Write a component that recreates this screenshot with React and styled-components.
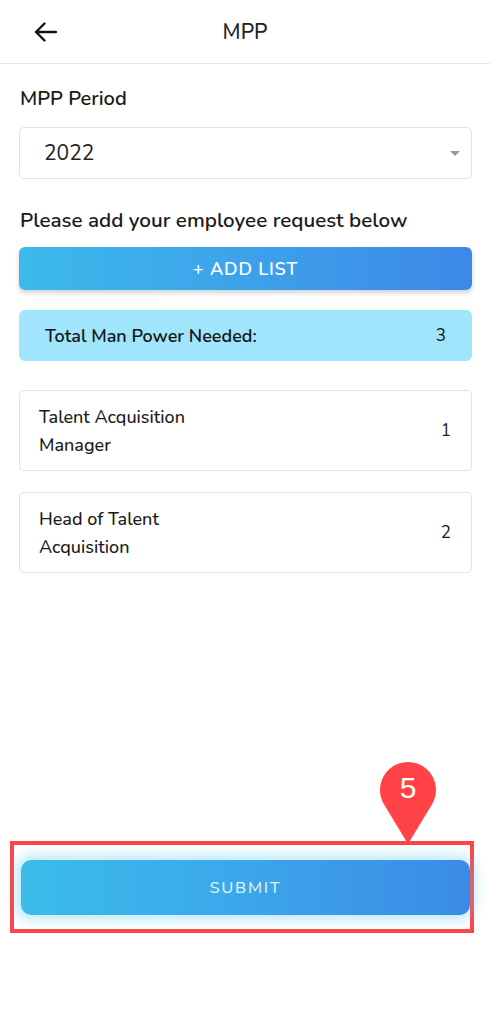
import styled, { createGlobalStyle } from "styled-components";

const GlobalStyle = createGlobalStyle`
    body {
        margin: 0;
        background: #ffffff;
        font-family: "Nunito", "Lato", "Open Sans", sans-serif;
        color: #1c1c1c;
    }
`

const Page = styled.div`
    width: 490px;
    min-height: 1024px;
    background: #ffffff;
`

const Header = styled.header`
    height: 63px;
    display: grid;
    grid-template-columns: 1fr auto 1fr;
    align-items: center;
    border-bottom: 1.5px solid #e6e6e6;
    padding: 0 34px;
`

const BackButton = styled.button`
    width: 24px;
    height: 24px;
    padding: 0;
    border: none;
    background: none;
    display: flex;
    align-items: center;
    cursor: pointer;
`

const Title = styled.h1`
    margin: 0;
    font-size: 21px;
    font-weight: 500;
    color: #222;
`

const Content = styled.main`
    padding: 0 18px 0 19px;
    display: flex;
    flex-direction: column;
`

const Label = styled.h2`
    margin: ${(p) => p.$top}px 0 0 1px;
    font-size: ${(p) => p.$size}px;
    font-weight: 600;
    line-height: 28px;
    color: #1a1a1a;
`

const Select = styled.div`
    margin-top: 14px;
    height: 52px;
    box-sizing: border-box;
    border: 1px solid #e2e2e2;
    border-radius: 5px;
    display: flex;
    align-items: center;
    justify-content: space-between;
    padding: 0 11px 0 24px;
    font-size: 21px;
    color: #222;
`

const Caret = styled.span`
    width: 0;
    height: 0;
    border-left: 5px solid transparent;
    border-right: 5px solid transparent;
    border-top: 5px solid #9a9a9a;
`

const AddButton = styled.button`
    margin-top: 13px;
    height: 43px;
    border: none;
    border-radius: 6px;
    background: linear-gradient(90deg, #3cb9ec 0%, #3da2ea 50%, #3d88e8 100%);
    box-shadow: 0 3px 5px rgba(0, 0, 0, 0.18);
    color: #ffffff;
    font-family: inherit;
    font-size: 18px;
    font-weight: 600;
    letter-spacing: 0.8px;
    cursor: pointer;
`

const TotalBox = styled.div`
    margin-top: 20px;
    height: 51px;
    border-radius: 6px;
    background: #a0e5fb;
    display: flex;
    align-items: center;
    justify-content: space-between;
    padding: 0 26px 0 26px;
    font-size: 18px;
    font-weight: 600;
    color: #151515;
`

const Count = styled.span`
    font-weight: 400;
    font-size: 17px;
`

const CardList = styled.div`
    margin-top: 29px;
    display: flex;
    flex-direction: column;
    gap: 21px;
`

const Card = styled.div`
    height: 81px;
    box-sizing: border-box;
    border: 1px solid #e2e2e2;
    border-radius: 5px;
    display: flex;
    align-items: center;
    justify-content: space-between;
    padding: 0 20px 0 19px;
    font-size: 18px;
    color: #1a1a1a;
`

const CardTitle = styled.div`
    width: 170px;
    line-height: 28px;
    font-weight: 500;
`

const Highlight = styled.div`
    position: relative;
    margin: 268px 0 0 10px;
    width: 464px;
    height: 92px;
    box-sizing: border-box;
    border: 4px solid #ff4346;
    padding: 15px 0 0 7px;
`

const SubmitButton = styled.button`
    width: 449px;
    height: 55px;
    border: none;
    border-radius: 10px;
    background: linear-gradient(90deg, #3bbcea 0%, #3ba9eb 45%, #3b8ae6 100%);
    box-shadow: 0 0 14px 4px rgba(90, 200, 240, 0.45);
    color: #dbf0fb;
    font-family: inherit;
    font-size: 16.5px;
    font-weight: 500;
    letter-spacing: 1.7px;
    cursor: pointer;
`

const Marker = styled.div`
    position: absolute;
    left: 363px;
    top: -86px;
    width: 62px;
    height: 86px;
    display: flex;
    justify-content: center;
`

const MarkerNumber = styled.span`
    position: absolute;
    top: 12px;
    left: 0;
    right: 0;
    text-align: center;
    font-family: "Liberation Sans", Arial, sans-serif;
    font-size: 30px;
    color: #ffffff;
`

const requests = [
    { title: "Talent Acquisition Manager", count: 1 },
    { title: "Head of Talent Acquisition", count: 2 },
];

const App = () => {
    return (
        <Page>
            <GlobalStyle />
            <Header>
                <BackButton aria-label="Back">
                    <svg width="23" height="20" viewBox="0 0 23 20" fill="none">
                        <path d="M22 10H2M10.5 1.5L2 10l8.5 8.5" stroke="#111" strokeWidth="2.4" strokeLinecap="round" strokeLinejoin="round" />
                    </svg>
                </BackButton>
                <Title>MPP</Title>
            </Header>
            <Content>
                <Label $top={21} $size={20}>MPP Period</Label>
                <Select>
                    <span>2022</span>
                    <Caret />
                </Select>
                <Label $top={27} $size={20.6}>Please add your employee request below</Label>
                <AddButton>+ ADD LIST</AddButton>
                <TotalBox>
                    <span>Total Man Power Needed:</span>
                    <Count>3</Count>
                </TotalBox>
                <CardList>
                    {requests.map((r) => (
                        <Card key={r.title}>
                            <CardTitle>{r.title}</CardTitle>
                            <Count>{r.count}</Count>
                        </Card>
                    ))}
                </CardList>
            </Content>
            <Highlight>
                <Marker>
                    <svg width="62" height="86" viewBox="0 0 62 86">
                        <path d="M31 85 L8 47 A28 28 0 1 1 54 47 Z" fill="#ff4346" />
                    </svg>
                    <MarkerNumber>5</MarkerNumber>
                </Marker>
                <SubmitButton>SUBMIT</SubmitButton>
            </Highlight>
        </Page>
    );
}

export default App;
